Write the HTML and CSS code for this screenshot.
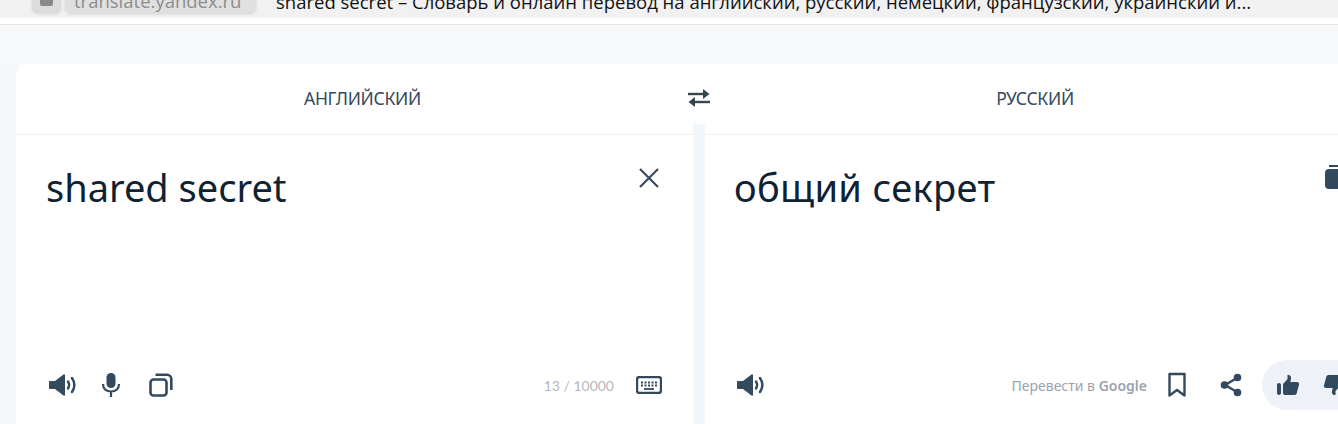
FILE: index.html
```html
<!DOCTYPE html>
<html lang="ru">
<head>
    <meta charset="UTF-8">
    <title>shared secret – Словарь и онлайн перевод</title>
    <link rel="stylesheet" href="styles.css">
</head>
<body>

<div class="tabbar">
    <div class="url-pill">
        <span class="url-chip"><span class="url-chip-dot"></span></span>
        <span class="url-text">translate.yandex.ru</span>
    </div>
    <div class="tab-title">shared secret – Словарь и онлайн перевод на английский, русский, немецкий, французский, украинский и...</div>
</div>

<div class="page">
    <div class="panels">
        <!-- Исходный текст -->
        <section class="panel panel-source">
            <div class="lang-row">АНГЛИЙСКИЙ</div>
            <div class="text-area">
                <div class="text-main">shared secret</div>
                <button class="icon-btn clear-btn">
                    <svg width="24" height="24" viewBox="0 0 24 24"><path d="M3 3l18 18M21 3L3 21" fill="none" stroke="#3b4c5a" stroke-width="2.200"/></svg>
                </button>
            </div>
            <div class="toolbar">
                <svg class="icon icon-speaker" width="28" height="24" viewBox="0 0 28 24"><path d="M0 9c0-.6.4-1 1-1h5l8.500-6.500c.7-.5 1.500 0 1.500.8v19.400c0 .8-.8 1.300-1.500.8L6 16H1c-.6 0-1-.4-1-1z" fill="#33495e"/><path d="M19 8.500c1.400 2.200 1.400 4.800 0 7M23 5c3 4.400 3 9.600 0 14" fill="none" stroke="#33495e" stroke-width="2.400" stroke-linecap="round"/></svg>
                <svg class="icon icon-mic" width="24" height="26" viewBox="0 0 24 26"><rect x="7.500" y="1" width="9" height="15" rx="4.500" fill="#33495e"/><path d="M4 12c0 5 3.500 7.500 8 7.500s8-2.500 8-7.500M12 19.500V25" fill="none" stroke="#33495e" stroke-width="2.200"/></svg>
                <svg class="icon icon-copy" width="24" height="24" viewBox="0 0 24 24"><rect x="1.500" y="6.500" width="16" height="16" rx="3" fill="none" stroke="#33495e" stroke-width="2.600"/><path d="M6.500 1.800h11.500c2.400 0 4.300 1.900 4.300 4.300V17" fill="none" stroke="#33495e" stroke-width="2.600"/></svg>
                <span class="spacer"></span>
                <span class="counter">13 / 10000</span>
                <svg class="icon icon-keyboard" width="26" height="18" viewBox="0 0 26 18"><rect x="1" y="1" width="24" height="16" rx="2.500" fill="none" stroke="#33495e" stroke-width="2.400"/><path d="M5 6.500h16M5 9.500h16" stroke="#33495e" stroke-width="1.800" stroke-dasharray="2 1.500"/><path d="M8 13h10" stroke="#33495e" stroke-width="1.800"/></svg>
            </div>
        </section>

        <div class="gutter"></div>

        <!-- Перевод -->
        <section class="panel panel-target">
            <div class="lang-row">РУССКИЙ</div>
            <div class="text-area">
                <div class="text-main">общий секрет</div>
                <svg class="corner-copy" width="22" height="26" viewBox="0 0 22 26"><path d="M5 1h10" stroke="#33495e" stroke-width="2"/><rect x="1" y="4" width="20" height="20" rx="4" fill="#33495e"/></svg>
            </div>
            <div class="toolbar">
                <svg class="icon icon-speaker" width="28" height="24" viewBox="0 0 28 24"><path d="M0 9c0-.6.4-1 1-1h5l8.500-6.500c.7-.5 1.500 0 1.500.8v19.400c0 .8-.8 1.300-1.500.8L6 16H1c-.6 0-1-.4-1-1z" fill="#33495e"/><path d="M19 8.500c1.400 2.200 1.400 4.800 0 7M23 5c3 4.400 3 9.600 0 14" fill="none" stroke="#33495e" stroke-width="2.400" stroke-linecap="round"/></svg>
                <span class="spacer"></span>
                <span class="google-link">Перевести в <b>Google</b></span>
                <svg class="icon icon-bookmark" width="20" height="26" viewBox="0 0 20 26"><path d="M2.500 2h15v21.500L10 18l-7.500 5.500z" fill="none" stroke="#33495e" stroke-width="2.400" stroke-linejoin="round"/></svg>
                <svg class="icon icon-share" width="24" height="24" viewBox="0 0 24 24"><path d="M18 5L6 12l12 7" fill="none" stroke="#33495e" stroke-width="2.400"/><circle cx="18.500" cy="4.500" r="3.800" fill="#33495e"/><circle cx="5.500" cy="12" r="3.800" fill="#33495e"/><circle cx="18.500" cy="19.500" r="3.800" fill="#33495e"/></svg>
                <div class="rate-pill">
                    <svg width="24" height="24" viewBox="0 0 24 24"><rect x="1" y="10" width="4" height="12" rx="2" fill="#33495e"/><path d="M7 11l4.500-5V2c2.500-.5 4 1.500 3.500 4l-.7 3H21c1.500 0 2.500 1.200 2 2.700l-2.300 8.500c-.3 1.100-1.200 1.800-2.300 1.800H9c-1.100 0-2-.9-2-2z" fill="#33495e"/></svg>
                    <svg width="24" height="24" viewBox="0 0 24 24"><rect x="19" y="2" width="4" height="12" rx="2" fill="#33495e"/><path d="M17 13l-4.500 5v4c-2.500.5-4-1.500-3.500-4l.7-3H3c-1.500 0-2.500-1.200-2-2.700l2.300-8.500C3.600 2.700 4.500 2 5.600 2H15c1.100 0 2 .9 2 2z" fill="#33495e"/></svg>
                </div>
            </div>
        </section>

        <button class="swap-btn">
            <svg width="22" height="18" viewBox="0 0 22 18"><path d="M0 5h16" stroke="#33454f" stroke-width="2.400"/><path d="M15 0l6.500 5-6.500 5z" fill="#33454f"/><path d="M22 13H6" stroke="#33454f" stroke-width="2.400"/><path d="M7 8l-6.500 5L7 18z" fill="#33454f"/></svg>
        </button>
    </div>
</div>

</body>
</html>
```

FILE: styles.css
```css
* {
    box-sizing: border-box;
}
html, body {
    height: 424px;
    margin: 0;
    overflow: hidden;
}
body {
    font-family: "Noto Sans", Arial, sans-serif;
    background-color: #f4f8fb;
    color: #0f2233;
}
.tabbar {
    display: flex;
    align-items: flex-end;
    height: 25px;
    padding: 0 0 7px 32px;
    background: linear-gradient(#f1f1f1 18px, #fff 18px);
    border-bottom: 1px solid #e6e6e6;
    overflow: hidden;
}
.url-pill {
    display: flex;
    align-items: flex-end;
    gap: 4px;
    height: 14px;
    margin-bottom: 4px;
}
.url-chip {
    display: flex;
    justify-content: center;
    width: 29px;
    height: 14px;
    background-color: #dcdcdc;
    border-radius: 0 0 6px 6px;
    box-shadow: 0 1px 3px rgba(0, 0, 0, 0.12);
}
.url-chip-dot {
    width: 13px;
    height: 7px;
    background-color: #8a8a8a;
    border-radius: 0 0 2px 2px;
}
.url-text {
    width: 191px;
    height: 14px;
    padding-left: 9px;
    font-family: "Open Sans", Arial, sans-serif;
    font-size: 18.500px;
    line-height: 3px;
    white-space: nowrap;
    color: #8d8d8d;
    background-color: #e0e0e0;
    border-radius: 0 0 6px 6px;
    box-shadow: 0 1px 3px rgba(0, 0, 0, 0.12);
}
.tab-title {
    margin-left: 20px;
    margin-bottom: 8px;
    font-family: "Open Sans", Arial, sans-serif;
    font-size: 18.500px;
    line-height: 14px;
    height: 14px;
    white-space: nowrap;
    color: #111;
}
.page {
    height: 399px;
    padding: 39px 0 0 16px;
    background: linear-gradient(#f6f8f9 39px, #f4f8fb 39px);
}
.panels {
    position: relative;
    display: flex;
    width: 1400px;
    height: 360px;
}
.panel {
    display: flex;
    flex-direction: column;
    background-color: #fff;
}
.panel-source {
    width: 677px;
    border-radius: 10px 0 0 0;
}
.panel-target {
    width: 690px;
    border-radius: 0 10px 0 0;
}
.gutter {
    width: 12px;
    background: linear-gradient(#fff 59px, #f1f6fb 59px);
}
.lang-row {
    height: 71px;
    line-height: 68px;
    border-bottom: 1px solid #eef0f2;
    text-align: center;
    font-size: 17.500px;
    letter-spacing: -0.300px;
    color: #34495c;
}
.panel-source .lang-row {
    padding-left: 16px;
}
.panel-target .lang-row {
    padding-right: 30px;
}
.text-area {
    position: relative;
    flex: 1;
    padding: 27px 30px 0;
}
.panel-target .text-area {
    padding-left: 29px;
}
.text-main {
    font-size: 38px;
    line-height: 50px;
}
.panel-target .text-main {
    letter-spacing: 0.350px;
}
.icon-btn {
    padding: 0;
    border: none;
    background: none;
}
.clear-btn {
    position: absolute;
    top: 31px;
    right: 32px;
    width: 24px;
    height: 24px;
}
.corner-copy {
    position: absolute;
    top: 30px;
    left: 619px;
}
.toolbar {
    display: flex;
    align-items: center;
    height: 50px;
    margin-bottom: 14px;
    padding-left: 33px;
}
.panel-source .toolbar {
    padding-right: 31px;
}
.panel-target .toolbar {
    padding-left: 32px;
    width: 690px;
}
.spacer {
    flex: 1;
}
.icon-mic {
    margin-left: 22px;
}
.icon-copy {
    margin-left: 26px;
}
.counter {
    font-size: 14px;
    font-family: "Lato", Arial, sans-serif;
    color: #b4b8bd;
    margin-right: 22px;
}
.google-link {
    font-size: 14px;
    color: #9aa3ad;
    margin-right: 20px;
    white-space: nowrap;
}
.google-link b {
    font-weight: 600;
}
.icon-bookmark {
    margin-right: 32px;
}
.rate-pill {
    display: flex;
    flex-shrink: 0;
    align-items: center;
    gap: 23px;
    width: 133px;
    height: 50px;
    margin-left: 19px;
    padding-left: 14px;
    background-color: #eef2f8;
    border-radius: 25px 0 0 25px;
}
.swap-btn {
    position: absolute;
    top: 8px;
    left: 657px;
    display: flex;
    align-items: center;
    justify-content: center;
    width: 52px;
    height: 52px;
    padding: 0;
    border: none;
    border-radius: 50%;
    background-color: #fff;
}
```
